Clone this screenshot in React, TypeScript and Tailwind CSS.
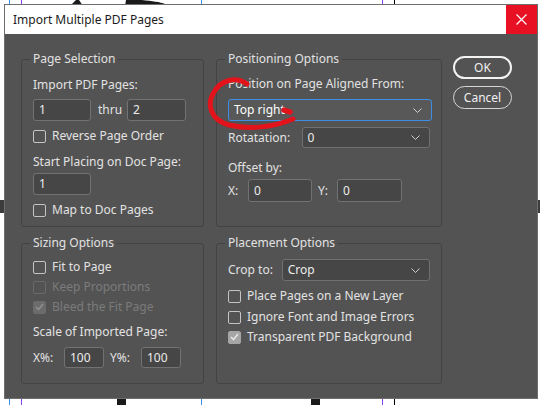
import React from 'react'

const font = { fontFamily: '"Noto Sans", "Open Sans", sans-serif' }

function Chevron() {
  return (
    <svg width="9" height="5" viewBox="0 0 9 5" className="shrink-0">
      <polyline points="0.5,0.5 4.5,4.5 8.5,0.5" fill="none" stroke="#cfcfcf" strokeWidth="1" />
    </svg>
  )
}

function Check({ label, checked = false, disabled = false, className = '' }: { label: string; checked?: boolean; disabled?: boolean; className?: string }) {
  let box = 'border-[#c4c4c4] bg-transparent'
  let tick = '#e8e8e8'
  if (checked && disabled) {
    box = 'border-[#6c6c6c] bg-[#6c6c6c]'
    tick = '#8f8f8f'
  } else if (checked) {
    box = 'border-[#a6a6a6] bg-[#a6a6a6]'
    tick = '#e6e6e6'
  } else if (disabled) {
    box = 'border-[#6a6a6a] bg-transparent'
  }
  return (
    <div className={`flex h-[16px] items-center ${className}`}>
      <span className={`flex h-[13px] w-[13px] items-center justify-center rounded-[2px] border ${box}`}>
        {checked && (
          <svg width="9" height="8" viewBox="0 0 9 8">
            <polyline points="1,4 3.5,6.5 8,1" fill="none" stroke={tick} strokeWidth="1.6" />
          </svg>
        )}
      </span>
      <span className={`ml-[6px] ${disabled ? 'text-[#7b7b7b]' : 'text-[#e2e2e2]'}`}>{label}</span>
    </div>
  )
}

function Field({ value, className = '' }: { value: string; className?: string }) {
  return (
    <div className={`flex items-center rounded-[3px] border border-[#727272] bg-[#464646] pl-[5px] text-[#ececec] ${className}`}>
      {value}
    </div>
  )
}

function Select({ value, focused = false, className = '' }: { value: string; focused?: boolean; className?: string }) {
  return (
    <div
      className={`flex items-center justify-between rounded-[3px] border pl-[5px] pr-[9px] text-[#ececec] ${
        focused ? 'border-[#3d8ee6] bg-[#585858] text-white' : 'border-[#707070] bg-[#464646]'
      } ${className}`}
    >
      <span>{value}</span>
      <Chevron />
    </div>
  )
}

function Group({ title, children }: { title: string; children: React.ReactNode }) {
  return (
    <fieldset className="h-full min-w-0 rounded-[3px] border border-[#434343] px-[11px]">
      <legend className="-ml-[3px] px-[3px] leading-[16px] text-[#e2e2e2]">{title}</legend>
      {children}
    </fieldset>
  )
}

export default function App() {
  return (
    <div className="relative h-[405px] w-[540px] overflow-hidden bg-white text-[12px] leading-[16px]" style={font}>
      {/* document behind the dialog */}
      <div className="absolute left-[9px] top-0 h-full w-[1px] bg-[#3b8ee8]" />
      <div className="absolute left-[21px] top-0 h-full w-[1px] bg-[#8b3ff0]" />
      <div className="absolute left-[201px] top-0 h-full w-[1px] bg-[#3b8ee8]" />
      <div className="absolute left-[382px] top-0 h-full w-[1px] bg-[#8b3ff0]" />
      <div className="absolute left-[394px] top-0 h-full w-[1px] bg-black" />
      <div className="absolute bottom-0 left-[117px] h-[8px] w-[9px] bg-[#1a1a1a]" />
      <div className="absolute bottom-0 left-[311px] h-[8px] w-[9px] bg-[#1a1a1a]" />
      <div className="absolute left-0 top-[200px] h-[13px] w-[4px] bg-[#3c3c3c]" />
      <div className="absolute right-0 top-[200px] h-[13px] w-[2px] bg-[#3c3c3c]" />
      <svg className="absolute left-0 top-0" width="540" height="6">
        <path d="M70 6 L76 0 L79 0 L83 6 Z" fill="#1a1a1a" />
        <path d="M125 6 L126 0 L142 0 C152 1 160 2 165 4 L165 6 Z" fill="#1a1a1a" />
      </svg>

      {/* dialog */}
      <div className="absolute left-[4px] top-[4px] flex h-[395px] w-[534px] flex-col border border-[#6e6e6e] bg-[#535353]">
        <div className="flex h-[29px] shrink-0 items-center bg-white">
          <span className="pl-[8px] text-[#1b1b1b]">Import Multiple PDF Pages</span>
          <div className="ml-auto flex h-full w-[31px] items-center justify-center bg-[#e81123]">
            <svg width="11" height="11" viewBox="0 0 11 11">
              <path d="M0.5 0.5 L10.5 10.5 M10.5 0.5 L0.5 10.5" stroke="#fff" strokeWidth="1.2" />
            </svg>
          </div>
        </div>

        <div className="flex pl-[16px] pt-[17px]">
          <div className="grid grid-cols-[183px_226px] grid-rows-[176px_149px] gap-x-[12px] gap-y-[8px]">
            <Group title="Page Selection">
              <p className="mt-[10px] text-[#e2e2e2]">Import PDF Pages:</p>
              <div className="mt-[6px] flex items-center">
                <Field value="1" className="h-[22px] w-[58px]" />
                <span className="ml-[7px] w-[29px] text-[#e2e2e2]">thru</span>
                <Field value="2" className="h-[22px] w-[59px]" />
              </div>
              <Check label="Reverse Page Order" className="mt-[7px]" />
              <p className="mt-[10px] text-[#e2e2e2]">Start Placing on Doc Page:</p>
              <Field value="1" className="mt-[3px] h-[22px] w-[58px]" />
              <Check label="Map to Doc Pages" className="mt-[7px]" />
            </Group>

            <Group title="Positioning Options">
              <p className="mt-[9px] text-[#e2e2e2]">Position on Page Aligned From:</p>
              <Select value="Top right" focused className="mt-[7px] h-[22px] w-[204px]" />
              <div className="mt-[6px] flex items-center">
                <span className="w-[74px] text-[#e2e2e2]">Rotatation:</span>
                <Select value="0" className="h-[21px] w-[129px]" />
              </div>
              <p className="mt-[12px] text-[#e2e2e2]">Offset by:</p>
              <div className="mt-[3px] flex items-center">
                <span className="w-[20px] text-[#e2e2e2]">X:</span>
                <Field value="0" className="h-[23px] w-[64px]" />
                <span className="ml-[6px] w-[19px] text-[#e2e2e2]">Y:</span>
                <Field value="0" className="h-[23px] w-[65px]" />
              </div>
            </Group>

            <Group title="Sizing Options">
              <Check label="Fit to Page" className="mt-[8px]" />
              <Check label="Keep Proportions" disabled className="mt-[4px]" />
              <Check label="Bleed the Fit Page" checked disabled className="mt-[4px]" />
              <p className="mt-[9px] text-[#e2e2e2]">Scale of Imported Page:</p>
              <div className="mt-[7px] flex items-center">
                <span className="w-[31px] text-[#e2e2e2]">X%:</span>
                <Field value="100" className="h-[21px] w-[40px]" />
                <span className="ml-[6px] w-[31px] text-[#e2e2e2]">Y%:</span>
                <Field value="100" className="h-[21px] w-[40px]" />
              </div>
            </Group>

            <Group title="Placement Options">
              <div className="mt-[8px] flex items-center">
                <span className="w-[54px] text-[#e2e2e2]">Crop to:</span>
                <Select value="Crop" className="h-[22px] w-[149px]" />
              </div>
              <Check label="Place Pages on a New Layer" className="mt-[7px]" />
              <Check label="Ignore Font and Image Errors" className="mt-[5px]" />
              <Check label="Transparent PDF Background" checked className="mt-[4px]" />
            </Group>
          </div>

          <div className="ml-[11px] mt-[5px] flex w-[59px] flex-col gap-[7px]">
            <button className="h-[23px] rounded-full border-2 border-[#f2f2f2] text-[#f0f0f0]">OK</button>
            <button className="h-[23px] rounded-full border border-[#d6d6d6] text-[#f0f0f0]">Cancel</button>
          </div>
        </div>
      </div>

      {/* red marker annotation */}
      <svg className="pointer-events-none absolute left-0 top-0" width="540" height="405">
        <path
          d="M247 84 C236 76 221 80 214 92 C206 105 211 120 229 125 C250 130 274 127 293 119"
          fill="none"
          stroke="#e3131b"
          strokeWidth="5"
          strokeLinecap="round"
        />
        <path d="M284 110 L290 112" stroke="#e3131b" strokeWidth="5.5" strokeLinecap="round" />
      </svg>
    </div>
  )
}
